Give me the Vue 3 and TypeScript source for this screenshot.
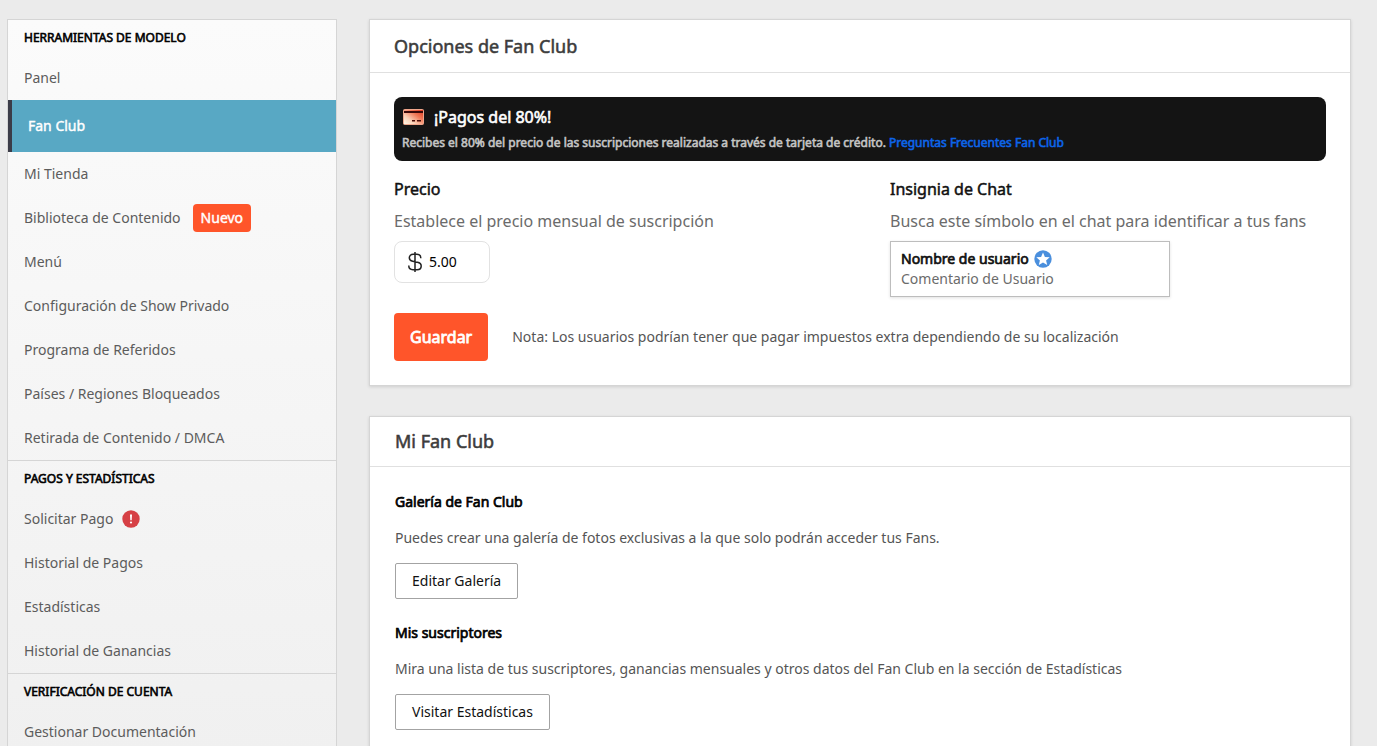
<script setup lang="ts">
import { ref } from 'vue'

interface NavItem {
  label: string
  active?: boolean
  badge?: string
  alert?: boolean
}

interface NavSection {
  title: string
  items: NavItem[]
}

const sections: NavSection[] = [
  {
    title: 'HERRAMIENTAS DE MODELO',
    items: [
      { label: 'Panel' },
      { label: 'Fan Club', active: true },
      { label: 'Mi Tienda' },
      { label: 'Biblioteca de Contenido', badge: 'Nuevo' },
      { label: 'Menú' },
      { label: 'Configuración de Show Privado' },
      { label: 'Programa de Referidos' },
      { label: 'Países / Regiones Bloqueados' },
      { label: 'Retirada de Contenido / DMCA' },
    ],
  },
  {
    title: 'PAGOS Y ESTADÍSTICAS',
    items: [
      { label: 'Solicitar Pago', alert: true },
      { label: 'Historial de Pagos' },
      { label: 'Estadísticas' },
      { label: 'Historial de Ganancias' },
    ],
  },
  {
    title: 'VERIFICACIÓN DE CUENTA',
    items: [{ label: 'Gestionar Documentación' }],
  },
]

const blocks = [
  {
    title: 'Galería de Fan Club',
    text: 'Puedes crear una galería de fotos exclusivas a la que solo podrán acceder tus Fans.',
    action: 'Editar Galería',
  },
  {
    title: 'Mis suscriptores',
    text: 'Mira una lista de tus suscriptores, ganancias mensuales y otros datos del Fan Club en la sección de Estadísticas',
    action: 'Visitar Estadísticas',
  },
]

const price = ref('5.00')
</script>

<template>
  <div class="page">
    <nav class="sidebar">
      <section v-for="section in sections" :key="section.title" class="section">
        <h3 class="section-title strong">{{ section.title }}</h3>
        <a
          v-for="item in section.items"
          :key="item.label"
          href="#"
          class="nav-item"
          :class="{ active: item.active, medium: item.active }"
        >
          <span>{{ item.label }}</span>
          <span v-if="item.badge" class="badge medium">{{ item.badge }}</span>
          <svg v-if="item.alert" class="alert" viewBox="0 0 18 18" aria-hidden="true">
            <circle cx="9" cy="9" r="8.7" fill="#d64045" />
            <path d="M8 4.4h2l-.3 5.8H8.3z" fill="#fff" />
            <circle cx="9" cy="12.5" r="1.1" fill="#fff" />
          </svg>
        </a>
      </section>
    </nav>

    <main class="main">
      <section class="card">
        <header class="card-head options-head"><h2 class="medium">Opciones de Fan Club</h2></header>
        <form class="options" @submit.prevent>
          <div class="banner strong">
            <div class="banner-title">
              <svg class="card-icon" viewBox="0 0 21 16" aria-hidden="true">
                <defs>
                  <linearGradient id="cardFill" x1="1" y1="0.1" x2="0.1" y2="1">
                    <stop offset="0" stop-color="#dc3a22" />
                    <stop offset="0.35" stop-color="#f27a58" />
                    <stop offset="0.7" stop-color="#fbd0b6" />
                    <stop offset="1" stop-color="#fff6e4" />
                  </linearGradient>
                </defs>
                <rect x="0.5" y="0.5" width="20" height="15" rx="1" fill="url(#cardFill)" stroke="#f0a78c" />
                <rect x="1" y="2" width="19" height="2" fill="#3a0808" />
                <rect x="9" y="11" width="3" height="1.5" fill="#4a0d08" />
                <rect x="14" y="11" width="4" height="1.5" fill="#4a0d08" />
              </svg>
              <span>¡Pagos del 80%!</span>
            </div>
            <p>
              Recibes el 80% del precio de las suscripciones realizadas a través de tarjeta de crédito.
              <a href="#">Preguntas Frecuentes Fan Club</a>
            </p>
          </div>

          <div class="columns">
            <div>
              <label class="field-title medium" for="price">Precio</label>
              <p class="field-text">Establece el precio mensual de suscripción</p>
              <div class="price">
                <svg class="dollar" viewBox="0 0 14 20" fill="none" stroke="#222" stroke-width="1.5" aria-hidden="true">
                  <path d="M7 0v20M12.8 6.2V6C12.8 3.6 11.2 2.2 8.8 2.2H5.2C2.9 2.2 1.3 3.7 1.3 5.8c0 2.2 1.3 3.1 3.4 3.5l4.7.9c2.4.5 3.8 1.6 3.8 3.7 0 2.300-1.700 3.800-4.100 3.800H5c-2.500 0-4.200-1.500-4.200-3.900v-.2" />
                </svg>
                <input id="price" v-model="price" type="text" />
              </div>
            </div>
            <div>
              <h4 class="field-title medium">Insignia de Chat</h4>
              <p class="field-text">Busca este símbolo en el chat para identificar a tus fans</p>
              <div class="chat">
                <div class="chat-user">
                  <span class="strong">Nombre de usuario</span>
                  <svg class="star" viewBox="0 0 18 18" aria-hidden="true">
                    <circle cx="9" cy="9" r="8.7" fill="#4a8fdd" />
                    <path d="M9 2.500l1.900 4.400 4.800.4-3.600 3.100 1.100 4.700L9 12.600l-4.200 2.500 1.100-4.700-3.600-3.100 4.800-.4z" fill="#fff" />
                  </svg>
                </div>
                <div class="chat-text">Comentario de Usuario</div>
              </div>
            </div>
          </div>

          <div class="save-row">
            <button type="submit" class="save strong">Guardar</button>
            <span>Nota: Los usuarios podrían tener que pagar impuestos extra dependiendo de su localización</span>
          </div>
        </form>
      </section>

      <section class="card">
        <header class="card-head club-head"><h2 class="medium">Mi Fan Club</h2></header>
        <div class="club">
          <article v-for="block in blocks" :key="block.title">
            <h4 class="strong">{{ block.title }}</h4>
            <p>{{ block.text }}</p>
            <button type="button" class="outline">{{ block.action }}</button>
          </article>
        </div>
      </section>
    </main>
  </div>
</template>

<style>
body {
  background: #ebebeb;
}
</style>

<style scoped>
.page {
  display: flex;
  align-items: flex-start;
  gap: 32px;
  padding: 19px 26px 0 7px;
  font: 14px/20px 'Noto Sans', 'Open Sans', sans-serif;
  color: #555;
}
.page * {
  box-sizing: border-box;
}
h2,
h3,
h4,
p {
  margin: 0;
}
.strong {
  font-weight: 400;
  -webkit-text-stroke: 0.05em currentColor;
}
.medium {
  font-weight: 400;
  -webkit-text-stroke: 0.03em currentColor;
}
.sidebar {
  flex: 0 0 330px;
  border: 1px solid #d5d5d5;
  background: linear-gradient(#fbfbfb, #f0f0f0);
}
.section + .section {
  border-top: 1px solid #d5d5d5;
}
.section-title {
  padding: 8px 16px;
  font-size: 12px;
  line-height: 20px;
  color: #000;
}
.nav-item {
  display: flex;
  align-items: center;
  height: 44px;
  padding: 0 16px;
  color: #5c5c5c;
  text-decoration: none;
}
.nav-item.active {
  height: 52px;
  border-left: 4px solid #3b3c48;
  background: #58a8c4;
  color: #fff;
}
.badge {
  margin-left: 12px;
  padding: 4px 8px;
  border-radius: 4px;
  background: #ff552a;
  color: #fff;
  line-height: 20px;
}
.alert {
  width: 18px;
  height: 18px;
  margin-left: 9px;
}
.main {
  flex: 1;
  min-width: 0;
  display: grid;
  gap: 30px;
}
.card {
  border: 1px solid #d5d5d5;
  background: #fff;
  box-shadow: 0 1px 3px rgba(0, 0, 0, 0.12);
}
.card-head {
  border-bottom: 1px solid #e0e0e0;
}
.card-head h2 {
  font-size: 18px;
  line-height: 24px;
  color: #3c3c3c;
}
.options-head {
  padding: 14px 24px;
}
.club-head {
  padding: 12px 25px 13px;
}
.options {
  padding: 24px;
}
.banner {
  padding: 8px;
  border-radius: 8px;
  background: #141414;
  color: #c4c4c4;
  font-size: 12px;
}
.banner-title {
  display: flex;
  align-items: center;
  gap: 10px;
  height: 24px;
  padding-left: 1px;
  color: #fff;
  font-size: 16px;
}
.banner p {
  padding-top: 4px;
  line-height: 20px;
}
.banner a {
  color: #0d65ea;
  text-decoration: none;
}
.card-icon {
  width: 21px;
  height: 16px;
}
.columns {
  display: grid;
  grid-template-columns: 1fr 1fr;
  gap: 60px;
  padding-top: 16px;
}
.field-title {
  display: block;
  font-size: 16px;
  line-height: 24px;
  color: #111;
}
.field-text {
  padding: 8px 0;
  font-size: 16px;
  line-height: 24px;
  color: #6b6b6b;
}
.price {
  display: flex;
  align-items: center;
  gap: 7px;
  width: 96px;
  height: 42px;
  padding: 0 13px;
  border: 1px solid #e2e2e2;
  border-radius: 8px;
}
.dollar {
  flex: none;
  width: 14px;
  height: 20px;
}
.price input {
  min-width: 0;
  width: 100%;
  padding: 0;
  border: 0;
  outline: 0;
  background: none;
  font: inherit;
  color: #000;
}
.chat {
  width: 280px;
  padding: 7px 10px;
  border: 1px solid #bdbdbd;
  box-shadow: 0 1px 3px rgba(0, 0, 0, 0.12);
}
.chat-user {
  display: flex;
  align-items: center;
  gap: 5px;
  color: #111;
}
.chat-text {
  color: #6b6b6b;
}
.star {
  width: 18px;
  height: 18px;
}
.save-row {
  display: flex;
  align-items: center;
  gap: 24px;
  padding-top: 16px;
}
.save {
  height: 48px;
  padding: 0 16px;
  border: 0;
  border-radius: 4px;
  background: #ff552a;
  color: #fff;
  font: 400 16px/24px 'Noto Sans', 'Open Sans', sans-serif;
}
.club {
  padding: 25px;
}
.club article + article {
  padding-top: 24px;
}
.club h4 {
  font-size: 14px;
  color: #000;
}
.club p {
  padding: 16px 0 15px;
}
.outline {
  height: 36px;
  padding: 0 16px;
  border: 1px solid #a3a3a3;
  border-radius: 2px;
  background: #fff;
  color: #111;
  font: 14px/20px 'Noto Sans', 'Open Sans', sans-serif;
}
</style>
